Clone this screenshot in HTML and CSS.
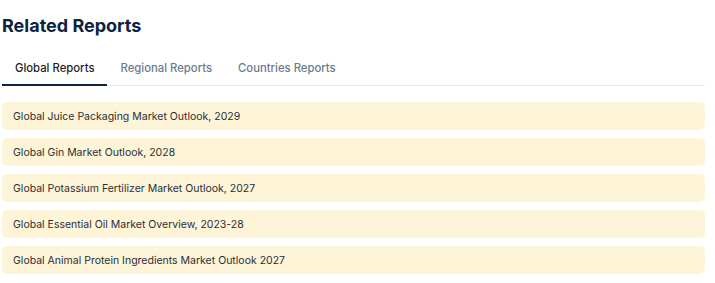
FILE: index.html
```html
<!DOCTYPE html>
<html>
<head>
<meta charset="utf-8">
<link rel="stylesheet" href="styles.css">
</head>
<body>
<section class="related">
  <h2 class="title">Related Reports</h2>
  <div class="tabs">
    <button class="tab active">Global Reports</button>
    <button class="tab">Regional Reports</button>
    <button class="tab">Countries Reports</button>
  </div>
  <ul class="list">
    <li class="item">Global Juice Packaging Market Outlook, 2029</li>
    <li class="item">Global Gin Market Outlook, 2028</li>
    <li class="item">Global Potassium Fertilizer Market Outlook, 2027</li>
    <li class="item">Global Essential Oil Market Overview, 2023-28</li>
    <li class="item">Global Animal Protein Ingredients Market Outlook 2027</li>
  </ul>
</section>
</body>
</html>
```

FILE: styles.css
```css
* { box-sizing: border-box; }
html, body { margin: 0; padding: 0; background: #fff; }
body { font-family: Inter, "Noto Sans", sans-serif; }
.related { width: 705px; padding: 0 0 0 2px; }
.title {
  margin: 0;
  padding-top: 14px;
  font-size: 18px;
  line-height: 24px;
  font-weight: 700;
  color: #0d2340;
}
.tabs {
  display: flex;
  margin-top: 16px;
  border-bottom: 1px solid #e6e8eb;
}
.tab {
  font-family: inherit;
  background: none;
  border: 0;
  margin: 0 0 -1px 0;
  padding: 7px 13px 8px 13px;
  font-size: 11.3px;
  line-height: 15px;
  font-weight: 500;
  color: #6b7a90;
  border-bottom: 2px solid transparent;
}
.tab.active { color: #1f2329; border-bottom-color: #0d2340; }
.list {
  list-style: none;
  margin: 16px 0 0 0;
  padding: 0;
  display: flex;
  flex-direction: column;
  gap: 8px;
}
.item {
  background: #fef4d7;
  border-radius: 5px;
  height: 28px;
  display: flex;
  align-items: center;
  padding-left: 11px;
  font-size: 10.5px;
  color: #2a2f36;
}
```
